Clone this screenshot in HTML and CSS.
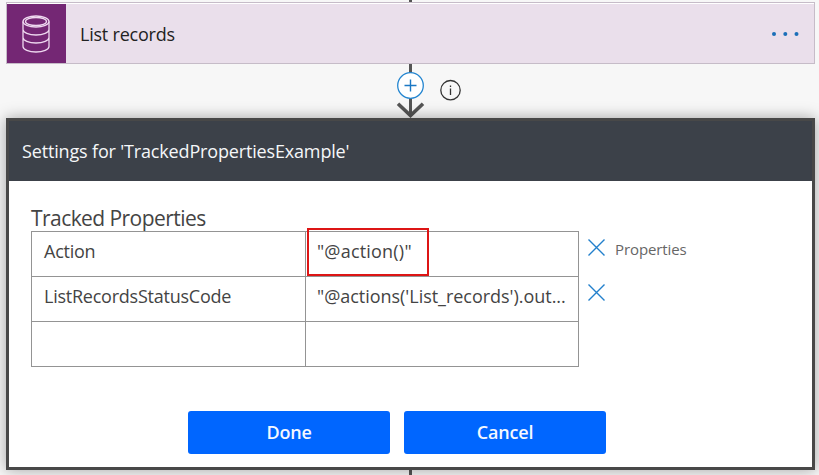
FILE: index.html
```html
<!DOCTYPE html>
<html lang="en">
<head>
<meta charset="utf-8">
<title>Flow designer</title>
<link rel="stylesheet" href="styles.css">
</head>
<body>
<main class="flow">
  <div class="stem stem-top"></div>
  <section class="card">
    <div class="card-icon">
      <svg width="28" height="38" viewBox="0 0 28 38" fill="none" stroke="#efd9f0" stroke-width="1.3">
        <ellipse cx="14" cy="6.5" rx="13" ry="5.5"/>
        <ellipse cx="14" cy="6.5" rx="10.5" ry="4"/>
        <path d="M1 6.5V31.500C1 34.500 6.800 37 14 37S27 34.500 27 31.500V6.500M1 14.500C1 17.500 6.800 20 14 20S27 17.500 27 14.500M1 22.500C1 25.500 6.800 28 14 28S27 25.500 27 22.500"/>
      </svg>
    </div>
    <span class="card-title">List records</span>
    <svg class="more" width="28" height="6" viewBox="0 0 28 6" fill="#1b6fb8"><circle cx="3" cy="3" r="2"/><circle cx="14.300" cy="3" r="2"/><circle cx="25.500" cy="3" r="2"/></svg>
  </section>
  <div class="connector">
    <svg width="70" height="54" viewBox="0 0 70 54" fill="none">
      <path d="M17.500 0V51" stroke="#555" stroke-width="3"/>
      <path d="M5 39.700L17.500 51.500L30 39.700" stroke="#555" stroke-width="3.600"/>
      <circle cx="17.500" cy="21.500" r="12.800" fill="#fff" stroke="#2586d0" stroke-width="1.300"/>
      <path d="M17.500 15.500V27.500M11.500 21.500H23.500" stroke="#1b78c4" stroke-width="1.400"/>
      <circle cx="57.500" cy="26.200" r="9.700" stroke="#333" stroke-width="1.300"/>
      <path d="M57.500 24.500V31M57.500 21.500V23" stroke="#333" stroke-width="1.300"/>
    </svg>
  </div>
  <section class="dialog">
    <header class="dialog-head"><span>Settings for 'TrackedPropertiesExample'</span></header>
    <div class="dialog-body">
      <h2 class="label">Tracked Properties</h2>
      <div class="properties">
        <div class="grid">
          <div class="cell key">Action</div>
          <div class="cell value-short marked">"@action()"</div>
          <div class="cell key">ListRecordsStatusCode</div>
          <div class="cell value">"@actions('List_records').out...</div>
          <div class="cell"></div>
          <div class="cell"></div>
        </div>
        <div class="actions">
          <div class="action"><svg width="17" height="17" viewBox="0 0 17 17" stroke="#2380cc" stroke-width="1.400"><path d="M.5.500L16.500 16.500M16.500.500L.5 16.500"/></svg><span>Properties</span></div>
          <div class="action"><svg width="17" height="17" viewBox="0 0 17 17" stroke="#2380cc" stroke-width="1.400"><path d="M.5.500L16.500 16.500M16.500.500L.5 16.500"/></svg></div>
        </div>
      </div>
      <div class="buttons"><button>Done</button><button>Cancel</button></div>
    </div>
  </section>
  <div class="stem stem-bottom"></div>
</main>
</body>
</html>
```
FILE: styles.css
```css
*, *::after { box-sizing: border-box; }
body { margin: 0; background: #f7f7f7; font-family: "Open Sans", "Noto Sans", sans-serif; }
svg { display: block; flex: none; }
.flow { height: 475px; padding: 0 4px 0 6px; overflow: hidden; }
.stem { width: 3px; margin-left: 403px; background: #555; }
.stem-top { height: 2px; }
.stem-bottom { height: 5px; }
.card { height: 62px; display: flex; align-items: center; background: #eadfeb; border: 1px solid #c6bcc8; box-shadow: inset 0 1px #fff; }
.card-icon { width: 59px; height: 59px; margin-top: 1px; background: #742774; display: flex; align-items: center; justify-content: center; }
.card-icon svg { margin-right: 2px; }
.card-title { flex: 1; margin: 2px 0 0 14px; font-size: 18px; letter-spacing: -.22px; color: #222; }
.more { margin: 2px 15px 0 0; }
.connector { height: 54px; padding-left: 387px; }
.dialog { height: 352px; border: 3px solid #484848; background: #fff; box-shadow: 0 0 14px rgba(0,0,0,.35); position: relative; }
.dialog-head { height: 60px; padding: 0 13px; background: #3c4149; color: #f5f7f9; display: flex; align-items: center; font-size: 18px; letter-spacing: -.16px; white-space: nowrap; }
.dialog-body { padding: 23px 22px 0; }
.label { margin: 0; height: 27px; line-height: 28px; font-size: 21px; font-weight: 400; letter-spacing: -.56px; color: #444; }
.properties { display: flex; }
.grid { width: 548px; display: grid; grid-template-columns: 274px 273px; grid-auto-rows: 45px; border: solid #949494; border-width: 1px 0 0 1px; }
.cell { position: relative; padding: 7px 11px; border: solid #949494; border-width: 0 1px 1px 0; font-size: 18px; line-height: 24px; color: #444; white-space: nowrap; }
.key { padding-left: 12px; letter-spacing: -.24px; }
.value { letter-spacing: -.03px; }
.value-short { letter-spacing: .2px; }
.marked::after { content: ""; position: absolute; left: 1px; top: -4px; width: 122px; height: 48px; border: 2px solid #dd1515; }
.actions { padding: 8px 0 0 9px; }
.action { display: flex; align-items: flex-start; gap: 10px; height: 45px; font-size: 15px; line-height: 21px; letter-spacing: -.1px; color: #666; }
.buttons { display: flex; justify-content: center; gap: 14px; margin-top: 44px; padding-right: 27px; }
button { width: 202px; height: 43px; border: 0; padding: 0 0 2px; border-radius: 3px; background: #06f; color: #f4f8ff; font: 600 18px "Open Sans", "Noto Sans", sans-serif; letter-spacing: -.2px; }
```
